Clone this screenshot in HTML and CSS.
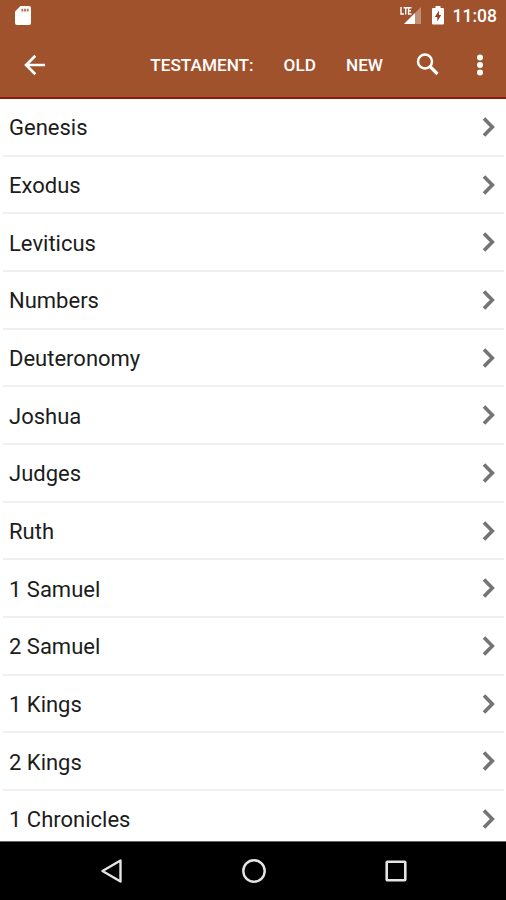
FILE: index.html
```html
<!DOCTYPE html>
<html lang="en">
<head>
<meta charset="utf-8">
<title>Books</title>
<link rel="stylesheet" href="styles.css">
</head>
<body>
<div class="screen">
  <header class="header">
    <div class="status">
      <svg class="sd" width="16" height="20" viewBox="0 0 16 20"><path fill="#fff" d="M5.5 0H14Q16 0 16 2V17Q16 19 14 19H2Q0 19 0 17V5.5Z"/><path stroke="#a0522d" stroke-width="2" d="M7.3 2.800v2.600M10 2.800v2.600M12.700 2.800v2.600" opacity=".75"/></svg>
      <svg class="signal" width="22" height="18" viewBox="0 0 22 18"><path fill="#fff" opacity=".35" d="M21 0V17H4Z"/><path fill="#fff" d="M15 6V17H4Z"/><path fill="none" stroke="#fff" stroke-width="1.4" d="M1 0V7H4M3.5 .7H8M5.7 .7V7.5M11.5 .7H8.6V7H11.5M8.6 3.8H11"/></svg>
      <svg class="battery" width="12" height="19" viewBox="0 0 12 19"><path fill="#fff" d="M3.5 0h5v2H11q1 0 1 1V17.500q0 1-1 1H1q-1 0-1-1V3q0-1 1-1h2.500Z"/><path fill="#93401f" d="M7 4.500 2.800 11H5.300V15.500L9.200 9H7Z"/></svg>
      <span class="time">11:08</span>
    </div>
    <div class="toolbar">
      <svg class="back" width="22" height="22" viewBox="0 0 22 22"><path fill="none" stroke="#fff" stroke-width="2.700" d="M21 11H2.500M11.300 1.800 2.100 11l9.200 9.200"/></svg>
      <span class="label testament">TESTAMENT:</span>
      <span class="label old">OLD</span>
      <span class="label new">NEW</span>
      <svg class="search" width="24" height="24" viewBox="0 0 24 24"><circle cx="9" cy="8.500" r="7" fill="none" stroke="#fff" stroke-width="2.500"/><path stroke="#fff" stroke-width="3.200" d="M14 13.500l7.500 7.500"/></svg>
      <svg class="more" width="6" height="22" viewBox="0 0 6 22"><g fill="#fff"><circle cx="3" cy="3.500" r="3"/><circle cx="3" cy="11" r="3"/><circle cx="3" cy="18.500" r="3"/></g></svg>
    </div>
  </header>
  <svg class="defs" width="0" height="0"><symbol id="chevron" viewBox="0 0 14 20"><path fill="none" stroke="#747474" stroke-width="3.600" d="M2 1.600 10.300 10 2 18.400"/></symbol></svg>
  <ul class="list">
    <li><span>Genesis</span><svg><use href="#chevron"/></svg></li>
    <li><span>Exodus</span><svg><use href="#chevron"/></svg></li>
    <li><span>Leviticus</span><svg><use href="#chevron"/></svg></li>
    <li><span>Numbers</span><svg><use href="#chevron"/></svg></li>
    <li><span>Deuteronomy</span><svg><use href="#chevron"/></svg></li>
    <li><span>Joshua</span><svg><use href="#chevron"/></svg></li>
    <li><span>Judges</span><svg><use href="#chevron"/></svg></li>
    <li><span>Ruth</span><svg><use href="#chevron"/></svg></li>
    <li><span>1 Samuel</span><svg><use href="#chevron"/></svg></li>
    <li><span>2 Samuel</span><svg><use href="#chevron"/></svg></li>
    <li><span>1 Kings</span><svg><use href="#chevron"/></svg></li>
    <li><span>2 Kings</span><svg><use href="#chevron"/></svg></li>
    <li><span>1 Chronicles</span><svg><use href="#chevron"/></svg></li>
  </ul>
  <nav class="nav">
    <svg width="24" height="26" viewBox="0 0 24 26"><path fill="none" stroke="#e4e4e4" stroke-width="2.400" stroke-linejoin="round" d="M20.500 2.500V23.500L2.500 13Z"/></svg>
    <svg width="26" height="26" viewBox="0 0 26 26"><circle cx="13" cy="13" r="10.700" fill="none" stroke="#e4e4e4" stroke-width="2.400"/></svg>
    <svg width="24" height="24" viewBox="0 0 24 24"><rect x="2.700" y="2.700" width="18.600" height="18.600" rx=".8" fill="none" stroke="#e4e4e4" stroke-width="2.600"/></svg>
  </nav>
</div>
</body>
</html>
```
FILE: styles.css
```css
body {
  margin: 0;
  font-family: Roboto, "Liberation Sans", sans-serif;
}
svg {
  display: block;
  flex: none;
}
.screen {
  display: flex;
  flex-direction: column;
  width: 506px;
  height: 900px;
  overflow: hidden;
  background: #fff;
}
.header {
  flex: none;
  box-sizing: border-box;
  height: 99px;
  background: #a0522d;
  border-bottom: 2px solid #8e1712;
  color: #fff;
}
.status {
  display: flex;
  align-items: center;
  box-sizing: border-box;
  height: 31px;
  padding: 0 9px 0 15px;
}
.signal {
  margin-left: auto;
}
.battery {
  margin: 0 9px 0 10px;
}
.time {
  font-size: 17.5px;
  font-weight: 500;
  line-height: 32px;
}
.toolbar {
  display: flex;
  align-items: center;
  height: 67px;
  padding: 0 23px 0 24px;
}
.label {
  font-size: 17.2px;
  font-weight: 500;
  line-height: 20px;
}
.testament {
  margin-left: auto;
}
.old {
  margin-left: 30px;
}
.new {
  margin-left: 30px;
}
.search {
  margin-left: 33px;
}
.more {
  margin-left: 37px;
}
.defs {
  position: absolute;
}
.list {
  flex: none;
  height: 742px;
  margin: 0;
  padding: 0 2px 0 3px;
  overflow: hidden;
  list-style: none;
}
.list li {
  display: flex;
  align-items: center;
  justify-content: space-between;
  box-sizing: border-box;
  height: 57.67px;
  padding: 0.4px 8px 0 6px;
  border-bottom: 2px solid #f0f0f0;
  color: #1c1c1c;
  font-size: 22px;
}
.list span {
  padding-top: 2.6px;
  line-height: 26px;
}
.list svg {
  width: 14px;
  height: 20px;
}
.nav {
  display: flex;
  flex: 1;
  align-items: center;
  justify-content: space-between;
  padding: 0 98px 0 100px;
  border-top: 1px solid #666;
  background: #000;
}
```
